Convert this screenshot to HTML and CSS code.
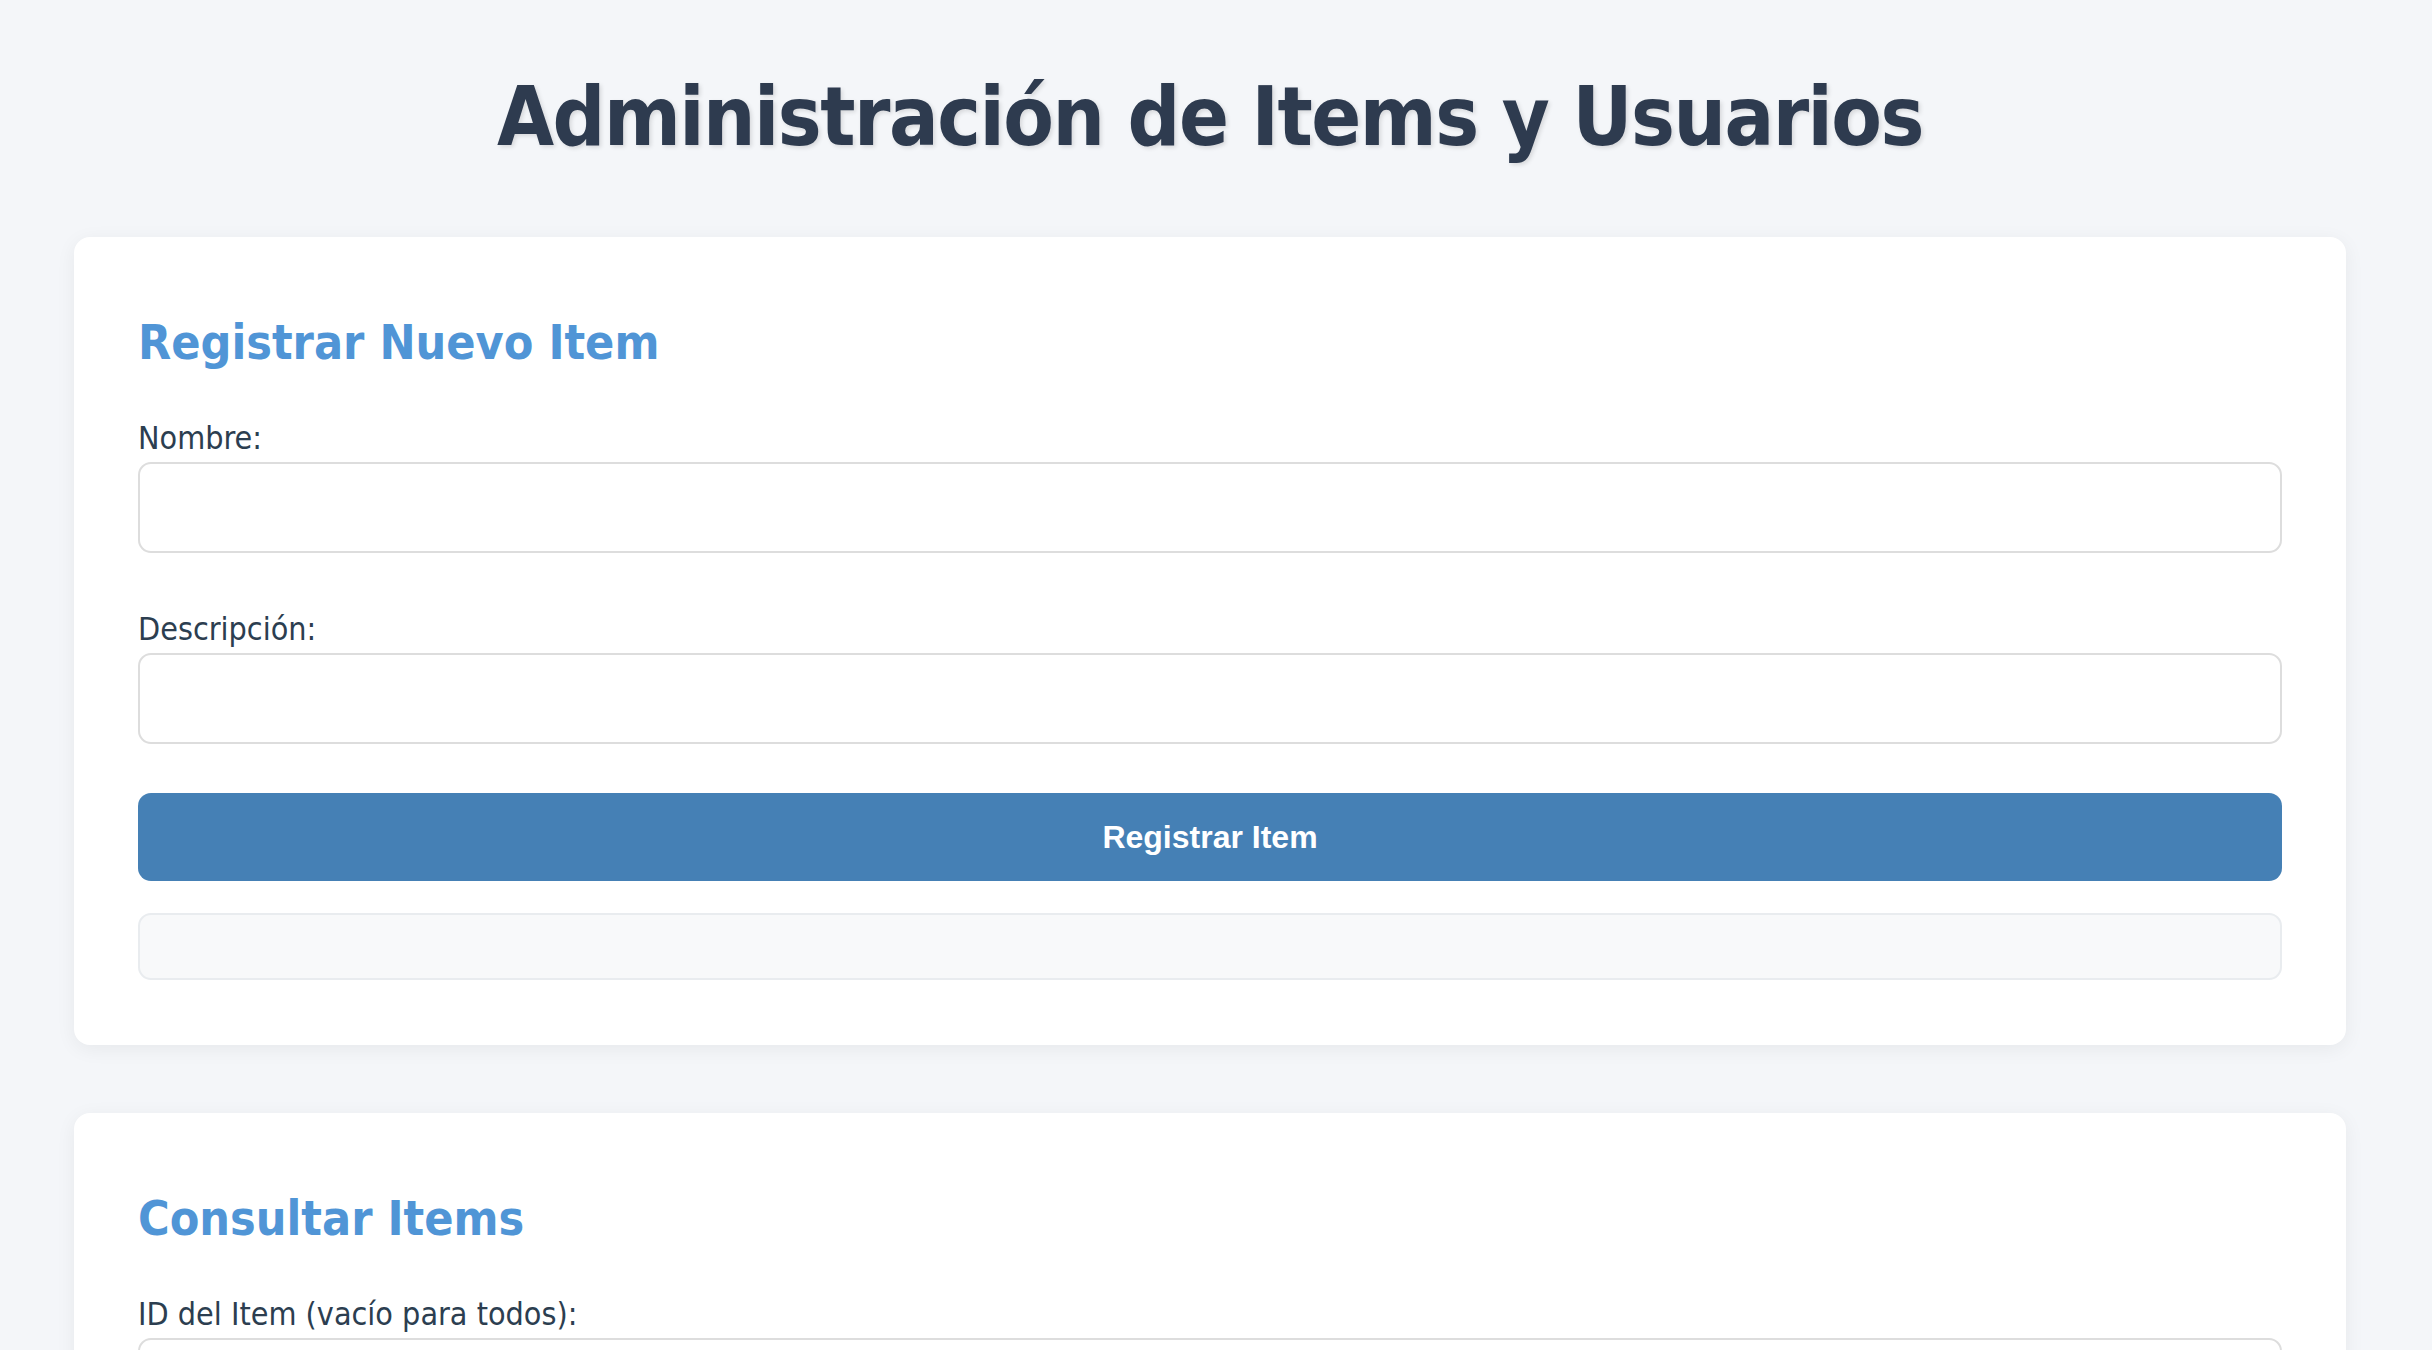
FILE: index.html
```html
<!DOCTYPE html>
<html lang="es">
<head>
<meta charset="utf-8">
<title>Administración de Items y Usuarios</title>
<link rel="stylesheet" href="styles.css">
</head>
<body>
<div class="page">
  <h1 class="title">Administración de Items y Usuarios</h1>

  <section class="card">
    <h2 class="card-title">Registrar Nuevo Item</h2>
    <div class="field">
      <label class="label" for="nombre">Nombre:</label>
      <input class="input" id="nombre" type="text">
    </div>
    <div class="field field-last">
      <label class="label" for="descripcion">Descripción:</label>
      <input class="input" id="descripcion" type="text">
    </div>
    <button class="btn" type="button">Registrar Item</button>
    <div class="message"></div>
  </section>

  <section class="card">
    <h2 class="card-title">Consultar Items</h2>
    <div class="field field-last">
      <label class="label" for="itemId">ID del Item (vacío para todos):</label>
      <input class="input" id="itemId" type="text">
    </div>
    <button class="btn" type="button">Consultar Items</button>
    <div class="message"></div>
  </section>

  <section class="card">
    <h2 class="card-title">Registrar Nuevo Usuario</h2>
    <div class="field">
      <label class="label" for="usuario">Usuario:</label>
      <input class="input" id="usuario" type="text">
    </div>
    <div class="field field-last">
      <label class="label" for="email">Email:</label>
      <input class="input" id="email" type="text">
    </div>
    <button class="btn" type="button">Registrar Usuario</button>
    <div class="message"></div>
  </section>
</div>
</body>
</html>
```

FILE: styles.css
```css
html, body {
  margin: 0;
  padding: 0;
}

body {
  background: #f4f6f9;
  color: #2c3e50;
  font-family: "DejaVu Sans", Verdana, sans-serif;
  font-stretch: condensed;
}

.page {
  padding: 69px 86px 60px 74px;
}

.title {
  margin: 0 0 72px;
  font-size: 82px;
  line-height: 96px;
  font-weight: bold;
  letter-spacing: -1.5px;
  text-align: center;
  color: #2e3b4f;
  text-shadow: 2px 2px 4px rgba(0, 0, 0, 0.12);
}

.card {
  background: #ffffff;
  border-radius: 16px;
  padding: 77px 64px 65px;
  margin-bottom: 68px;
  box-shadow: 0 4px 20px rgba(0, 0, 0, 0.06);
}

.card-title {
  margin: 0 0 48px;
  font-size: 48px;
  line-height: 56px;
  font-weight: bold;
  color: #5095d6;
}

.field {
  margin-bottom: 56px;
}

.field-last {
  margin-bottom: 49px;
}

.label {
  display: block;
  font-size: 32px;
  line-height: 40px;
  margin-bottom: 4px;
  color: #2c3e50;
}

.input {
  display: block;
  box-sizing: border-box;
  width: 100%;
  height: 91px;
  margin: 0;
  padding: 0 24px;
  border: 2px solid #dddddd;
  border-radius: 13px;
  background: #ffffff;
  font-family: "DejaVu Sans", Verdana, sans-serif;
  font-size: 32px;
}

.btn {
  display: block;
  width: 100%;
  height: 88px;
  margin: 0;
  border: none;
  border-radius: 13px;
  background: #4580b5;
  color: #ffffff;
  font-family: "Liberation Sans", Arial, sans-serif;
  font-size: 32px;
  font-weight: bold;
}

.message {
  box-sizing: border-box;
  margin-top: 32px;
  height: 67px;
  background: #f8f9fa;
  border: 2px solid #e9ecef;
  border-radius: 13px;
}
```
